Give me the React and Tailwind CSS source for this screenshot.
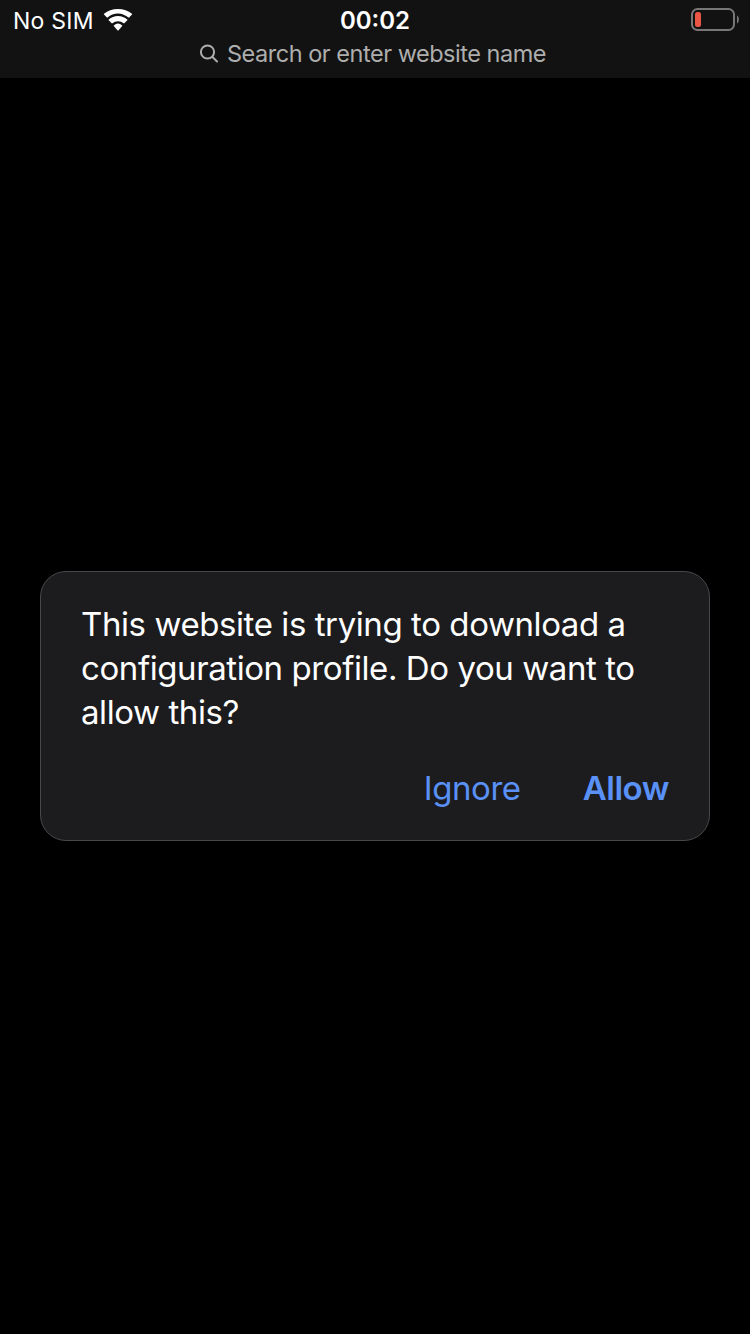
function Wifi() {
  return (
    <svg width="30" height="22" viewBox="0 0 30 22" className="ml-[9px] shrink-0">
      <path fill="#fff" d="M15 4.4c4 0 7.700 1.600 10.400 4.200.2.200.5.200.7 0l2.900-3c.3-.2.3-.6 0-.8C25.300 1.800 20.400 0 15 0S4.700 1.800 1 4.800c-.3.200-.3.600 0 .8l2.900 3c.2.200.5.200.7 0A15 15 0 0 1 15 4.400z" />
      <path fill="#fff" d="M15 12.200c2.100 0 4.100.8 5.600 2.100.2.200.5.200.7 0l3-3c.2-.2.2-.6 0-.8a13.800 13.800 0 0 0-18.600 0c-.2.200-.2.600 0 .8l3 3c.2.200.5.200.7 0a8.500 8.500 0 0 1 5.600-2.100z" />
      <path fill="#fff" d="M19.200 17.100c.2-.2.200-.5 0-.7a6.500 6.500 0 0 0-8.400 0c-.2.200-.2.500 0 .7l3.800 4.300c.2.200.6.200.8 0z" />
    </svg>
  );
}

export default function App() {
  return (
    <div className="flex h-[1334px] w-[750px] flex-col bg-black font-['Inter',sans-serif] text-white">
      <header className="h-[78px] bg-[#121212]">
        <div className="grid h-10 grid-cols-3 items-center">
          <div className="flex items-center pl-[13px]">
            <span className="pt-[2px] text-[23px] tracking-[0.25px]">No SIM</span>
            <Wifi />
          </div>
          <span className="pt-[2px] text-center text-[24px] font-semibold">00:02</span>
          <div className="flex justify-end pr-[10px]">
            <svg width="49" height="24" viewBox="0 0 49 24">
              <rect x="1" y="1" width="42" height="21" rx="5.500" fill="none" stroke="#777" strokeWidth="2" />
              <rect x="4" y="4" width="6" height="15" rx="2.500" fill="#eb5545" />
              <path d="M46 7.500v8c2.500-1 2.500-7 0-8z" fill="#777" />
            </svg>
          </div>
        </div>
        <div className="flex h-7 items-center pl-[199px] text-[#aeaeae]">
          <svg width="20" height="20" viewBox="0 0 20 20" fill="none" stroke="currentColor" strokeWidth="2" strokeLinecap="round">
            <circle cx="8.500" cy="8" r="6.600" />
            <path d="M13.500 13l4.500 4.500" />
          </svg>
          <span className="ml-2 whitespace-nowrap text-[23.5px] tracking-[-0.48px]">Search or enter website name</span>
        </div>
      </header>
      <main className="px-10 pt-[493px]">
        <section className="h-[270px] rounded-[26px] border border-[#48484a] bg-[#1c1c1e] px-[39px] pt-[30px]">
          <p className="whitespace-nowrap pl-px text-[33px] leading-[44px] tracking-[-0.42px]">
            This website is trying to download a<br />
            configuration profile. Do you want to<br />
            allow this?
          </p>
          <div className="mt-8 flex justify-end gap-[62px] pr-px text-[33px] leading-[44px] tracking-[-0.45px] text-[#5a91f7]">
            <button>Ignore</button>
            <button className="font-semibold">Allow</button>
          </div>
        </section>
      </main>
    </div>
  );
}
